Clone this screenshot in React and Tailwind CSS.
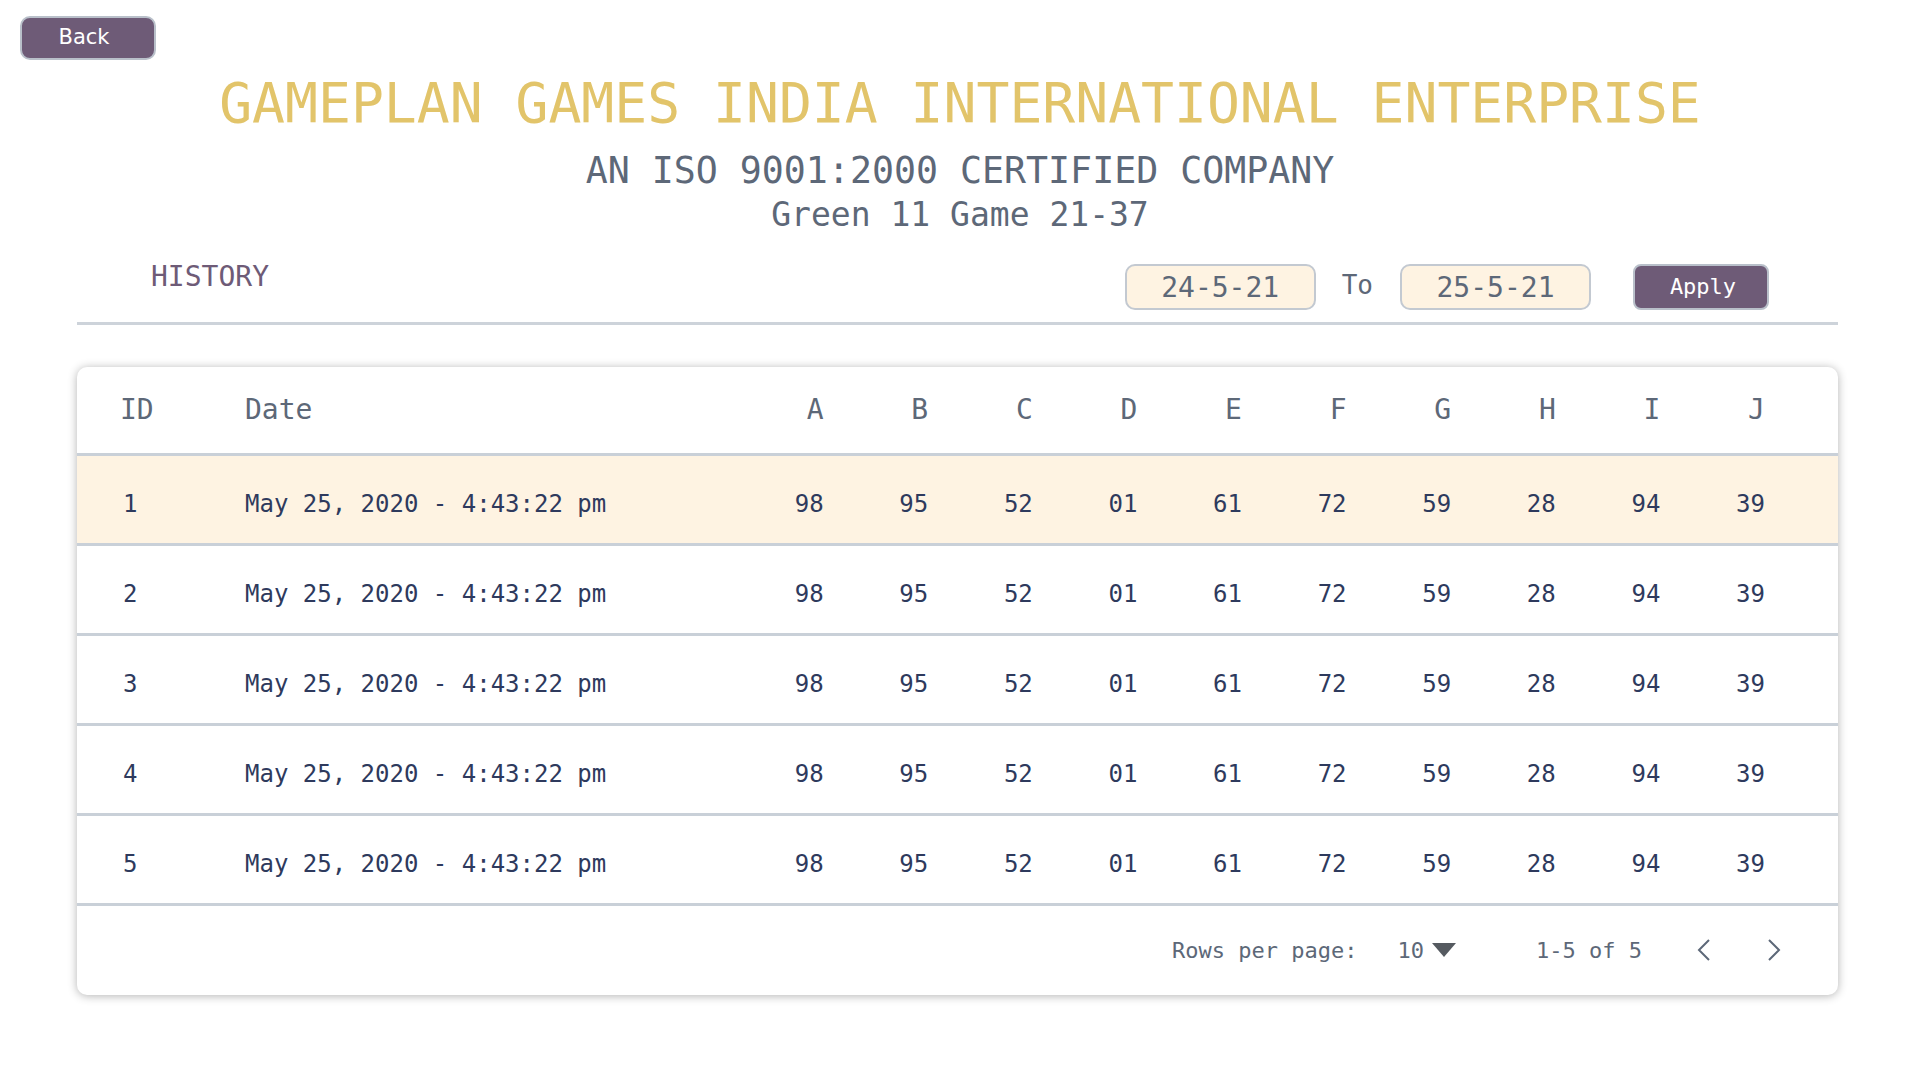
import React from "react";

const cols = ["A", "B", "C", "D", "E", "F", "G", "H", "I", "J"];
const vals = ["98", "95", "52", "01", "61", "72", "59", "28", "94", "39"];
const rows = [1, 2, 3, 4, 5];

export default function App() {
  return (
    <div className="min-h-[1080px] w-[1920px] bg-white font-['DejaVu_Sans_Mono',monospace]">
      <div className="pl-[20px] pt-[16px]">
        <button className="flex h-[44px] w-[136px] items-center justify-center rounded-[10px] border-2 border-[#b9c0ca] bg-[#6e5b77] pr-[8px] font-['DejaVu_Sans',sans-serif] text-[21px] text-white">
          Back
        </button>
      </div>

      <h1 className="mt-[16px] text-center text-[54.7px] font-normal leading-none text-[#e2c46a]">
        GAMEPLAN GAMES INDIA INTERNATIONAL ENTERPRISE
      </h1>
      <div className="mt-[20px] text-center text-[36.6px] leading-[40px] text-[#5d6878]">
        AN ISO 9001:2000 CERTIFIED COMPANY
      </div>
      <div className="mt-[4px] text-center text-[33px] leading-[40px] text-[#5d6878]">
        Green 11 Game 21-37
      </div>

      <div className="ml-[77px] mt-[29px] w-[1761px]">
        <div className="flex items-start">
          <div className="ml-[74px] text-[28px] leading-[26px] text-[#6e5b77]">HISTORY</div>
          <div className="flex-1" />
          <div className="flex h-[46px] w-[191px] items-center justify-center rounded-[10px] border-2 border-[#c3c9d1] bg-[#fef3e2] pt-[2px] text-[28px] text-[#5d6878]">
            24-5-21
          </div>
          <div className="ml-[26px] mr-[27px] mt-[6px] text-[26px] leading-[30px] text-[#5d6878]">To</div>
          <div className="flex h-[46px] w-[191px] items-center justify-center rounded-[10px] border-2 border-[#c3c9d1] bg-[#fef3e2] pt-[2px] text-[28px] text-[#5d6878]">
            25-5-21
          </div>
          <button className="ml-[42px] mr-[69px] flex h-[46px] w-[136px] items-center justify-center rounded-[8px] border-2 border-[#b9c0ca] bg-[#6e5b77] pl-[4px] text-[22px] text-white">
            Apply
          </button>
        </div>

        <div className="mt-[12px] h-[3px] bg-[#cdd3da]" />

        <div className="mt-[42px] overflow-hidden rounded-[10px] bg-white shadow-[0_1px_10px_rgba(0,0,0,0.3)]">
          <div className="grid h-[89px] grid-cols-[125px_474px_repeat(10,104.6px)] items-center border-b-[3px] border-[#c9d0d8] pl-[43px] text-[28px] text-[#5d6878]">
            <div>ID</div>
            <div>Date</div>
            {cols.map((c) => (
              <div key={c} className="text-right">
                {c}
              </div>
            ))}
          </div>

          {rows.map((r) => (
            <div
              key={r}
              className={
                "grid h-[90px] grid-cols-[125px_474px_repeat(10,104.6px)] items-center border-b-[3px] border-[#c9d0d8] pl-[43px] pt-[10px] text-[24px] text-[#2e3a5d] " +
                (r === 1 ? "bg-[#fef3e2]" : "bg-white")
              }
            >
              <div className="pl-[3px]">{r}</div>
              <div>May 25, 2020 - 4:43:22 pm</div>
              {vals.map((v, i) => (
                <div key={i} className="text-right">
                  {v}
                </div>
              ))}
            </div>
          ))}

          <div className="flex h-[89px] items-center justify-end pr-[54px] text-[22px] text-[#5d6878]">
            <span>Rows per page:</span>
            <span className="ml-[40px]">10</span>
            <svg className="ml-[8px]" width="24" height="14" viewBox="0 0 24 14">
              <polygon points="0,0 24,0 12,14" fill="#555a60" />
            </svg>
            <span className="ml-[80px]">1-5 of 5</span>
            <svg className="ml-[52px]" width="20" height="24" viewBox="0 0 20 24">
              <polyline points="15,2 5,12 15,22" fill="none" stroke="#5d6878" strokeWidth="2" />
            </svg>
            <svg className="ml-[50px]" width="20" height="24" viewBox="0 0 20 24">
              <polyline points="5,2 15,12 5,22" fill="none" stroke="#5d6878" strokeWidth="2" />
            </svg>
          </div>
        </div>
      </div>
    </div>
  );
}
